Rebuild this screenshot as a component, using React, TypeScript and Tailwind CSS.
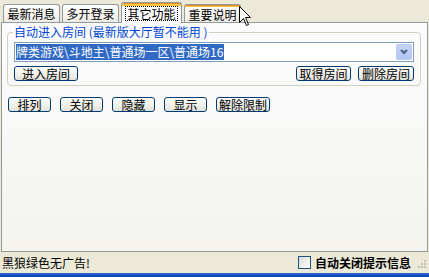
import React from "react";

const font = "font-['SimSun','Noto_Sans_CJK_SC',sans-serif]";

function Tab({ label, active, hover }: { label: string; active?: boolean; hover?: boolean }) {
  if (active) {
    return (
      <div className="relative z-10 -mb-px mt-0 flex h-[21px] w-[61px] flex-col rounded-t-[3px] border border-b-0 border-[#919b9c] bg-[#fcfcfe]">
        <div className="h-[3px] rounded-t-[2px] bg-[#ffc83c] border-t border-[#e68b2c]" />
        <div className="flex flex-1 items-start justify-center">
          <span className="border border-dotted border-black px-[1px] leading-[13px]">{label}</span>
        </div>
      </div>
    );
  }
  return (
    <div className="mt-[3px] flex h-[18px] w-[57px] flex-col rounded-t-[3px] border border-b-0 border-[#919b9c] bg-gradient-to-b from-white to-[#ecebe5]">
      {hover && <div className="h-[2px] bg-[#ffc83c] border-t border-[#e68b2c]" />}
      <div className="flex flex-1 items-center justify-center leading-none">{label}</div>
    </div>
  );
}

function Btn({ label, w }: { label: string; w: string }) {
  return (
    <button
      className={`${w} flex h-[15px] items-center justify-center rounded-[3px] border border-[#003c74] bg-gradient-to-b from-white to-[#e3e2d9] leading-none text-black`}
    >
      {label}
    </button>
  );
}

export default function App() {
  return (
    <div className={`relative flex h-[277px] w-[429px] flex-col overflow-hidden bg-[#ece9d8] text-[12px] text-black ${font}`}>
      <div className="flex items-end gap-[2px] pl-[3px] pt-[1px]">
        <Tab label="最新消息" />
        <Tab label="多开登录" />
        <Tab label="其它功能" active />
        <Tab label="重要说明" hover />
      </div>

      <div className="mx-[1px] flex flex-1 flex-col border border-[#919b9c] bg-gradient-to-b from-[#fcfcfe] to-[#f4f3ee] px-[5px] pt-[3px]">
        <div className="relative mt-[6px] mr-[1px] rounded-[4px] border border-[#d0d0bf] px-[6px] pb-[4px] pt-[9px]">
          <span className="absolute -top-[8px] left-[5px] bg-[#fbfbfc] px-[1px] leading-[14px] text-[#0046d5]">
            自动进入房间 (最新版大厅暂不能用 )
          </span>
          <div className="flex h-[20px] items-center border border-[#7f9db9] bg-white p-[1px]">
            <div className="flex h-full flex-1 items-center">
              <span className="bg-[#316ac5] pr-[1px] leading-[16px] text-white">牌类游戏\斗地主\普通场一区\普通场16</span>
            </div>
            <div className="flex h-[16px] w-[16px] items-center justify-center rounded-[2px] border border-[#b8cbf6] bg-gradient-to-b from-[#c6d3f7] to-[#b1c5f4]">
              <svg width="8" height="6" viewBox="0 0 8 6">
                <path d="M1 1 L4 4 L7 1" stroke="#4d6185" strokeWidth="2" fill="none" />
              </svg>
            </div>
          </div>
          <div className="mt-[4px] flex items-center">
            <Btn label="进入房间" w="w-[64px]" />
            <div className="flex-1" />
            <Btn label="取得房间" w="w-[55px]" />
            <div className="w-[7px]" />
            <Btn label="删除房间" w="w-[56px]" />
          </div>
        </div>

        <div className="mt-[11px] flex gap-[9px] pl-[1px]">
          <Btn label="排列" w="w-[43px]" />
          <Btn label="关闭" w="w-[43px]" />
          <Btn label="隐藏" w="w-[43px]" />
          <Btn label="显示" w="w-[43px]" />
          <Btn label="解除限制" w="w-[54px]" />
        </div>
      </div>

      <div className="flex h-[21px] items-center pl-[2px] pr-[2px]">
        <span className="flex-1">黑狼绿色无广告!</span>
        <div className="h-[13px] w-[13px] border border-[#1c5180] bg-gradient-to-br from-[#dcdcd7] to-white" />
        <span className="ml-[4px] font-bold">自动关闭提示信息</span>
        <div className="ml-[4px] flex h-[12px] w-[12px] items-end justify-end">
          <svg width="12" height="12" viewBox="0 0 12 12">
            <rect x="9" y="3" width="2" height="2" fill="#c0bfb4" />
            <rect x="6" y="6" width="2" height="2" fill="#c0bfb4" />
            <rect x="9" y="6" width="2" height="2" fill="#c0bfb4" />
            <rect x="3" y="9" width="2" height="2" fill="#c0bfb4" />
            <rect x="6" y="9" width="2" height="2" fill="#c0bfb4" />
            <rect x="9" y="9" width="2" height="2" fill="#c0bfb4" />
          </svg>
        </div>
      </div>
      <div className="h-[4px] bg-gradient-to-b from-[#3168d5] to-[#0a3eb8]" />

      <svg className="absolute left-[239px] top-[6px]" width="13" height="21" viewBox="0 0 13 21">
        <path d="M0.5 0.5 L0.5 16.5 L4.5 12.5 L7.5 19.5 L9.5 18.5 L6.5 11.5 L11.5 11.5 Z" fill="white" stroke="black" strokeWidth="1" />
      </svg>
    </div>
  );
}
